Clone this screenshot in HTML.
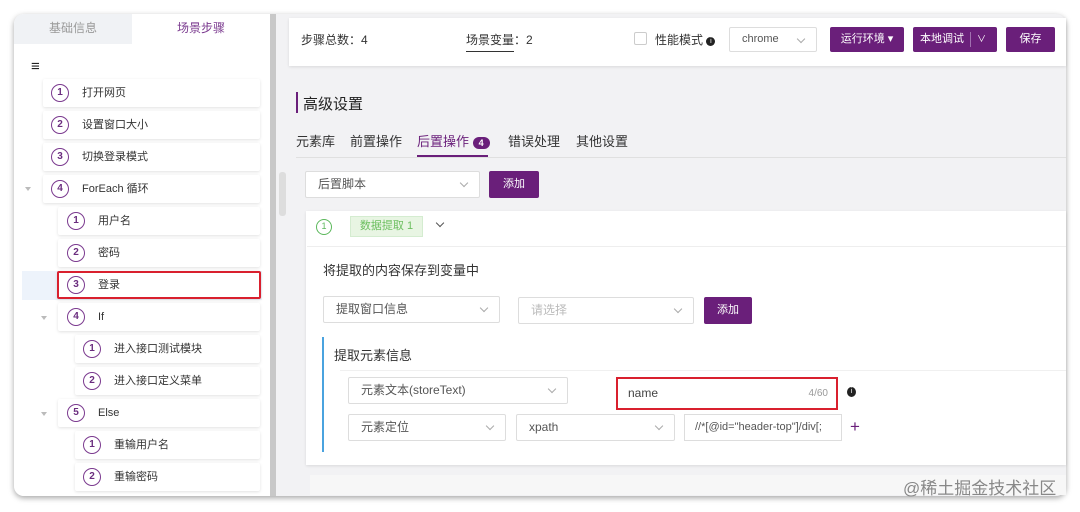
<!DOCTYPE html><html><head><meta charset="utf-8"><style>
*{box-sizing:border-box;margin:0;padding:0}
body{width:1080px;height:512px;background:#fff;font-family:"Liberation Sans","Noto Sans CJK SC",sans-serif;position:relative;overflow:hidden;color:#333}
.a{position:absolute}
.win{left:14px;top:14px;width:1052px;height:482px;border-radius:10px;overflow:hidden;background:#f2f2f4;box-shadow:0 2px 6px rgba(0,0,0,.35)}
.item{position:absolute;height:28px;background:#fff;box-shadow:0 1px 3px rgba(0,0,0,.12);border-radius:2px;font-size:11px;color:#333;line-height:28px}
.c{position:absolute;top:5px;width:18px;height:18px;border:1.5px solid #7b3a8f;border-radius:50%;font-size:10px;line-height:15px;text-align:center;color:#6a2c7e;font-weight:bold}
.arr{position:absolute;width:0;height:0;border-left:3px solid transparent;border-right:3px solid transparent;border-top:4px solid #bbb}
.sel{position:absolute;height:27px;background:#fff;border:1px solid #ddd;border-radius:2px;font-size:12px;line-height:25px;padding-left:12px;color:#555}
.sel:after{content:"";position:absolute;right:12px;top:8px;width:5px;height:5px;border-right:1px solid #aaa;border-bottom:1px solid #aaa;transform:rotate(45deg)}
.btn{position:absolute;background:#6a1f7a;color:#fff;font-size:11px;text-align:center;border-radius:2px}
</style></head><body>
<div class="a win">
<div class="a" style="left:0;top:0;width:256px;height:482px;background:#fff"></div>
<div class="a" style="left:0;top:0;width:118px;height:30px;background:#f0f2f5;color:#999;font-size:12px;text-align:center;line-height:28px">基础信息</div>
<div class="a" style="left:118px;top:0;width:138px;height:30px;color:#7b3a8f;font-size:12px;text-align:center;line-height:28px">场景步骤</div>
<div class="a" style="left:17px;top:44px;font-size:15px;font-weight:bold;color:#222">≡</div>
<div class="a" style="left:256px;top:0;width:6px;height:482px;background:#c8c8c8"></div>
<div class="a" style="left:265px;top:158px;width:7px;height:44px;background:#ddd;border-radius:3px"></div>
<div class="a" style="left:8px;top:257px;width:240px;height:29px;background:#edf3fb"></div>
</div>
<div class="item" style="left:43px;top:79px;width:217px"><span class="c" style="left:8px">1</span><span class="a" style="left:39px">打开网页</span></div>
<div class="item" style="left:43px;top:111px;width:217px"><span class="c" style="left:8px">2</span><span class="a" style="left:39px">设置窗口大小</span></div>
<div class="item" style="left:43px;top:143px;width:217px"><span class="c" style="left:8px">3</span><span class="a" style="left:39px">切换登录模式</span></div>
<div class="arr" style="left:25px;top:187px"></div>
<div class="item" style="left:43px;top:175px;width:217px"><span class="c" style="left:8px">4</span><span class="a" style="left:39px">ForEach 循环</span></div>
<div class="item" style="left:58px;top:207px;width:202px"><span class="c" style="left:9px">1</span><span class="a" style="left:40px">用户名</span></div>
<div class="item" style="left:58px;top:239px;width:202px"><span class="c" style="left:9px">2</span><span class="a" style="left:40px">密码</span></div>
<div class="item" style="left:57px;top:271px;width:204px;border:2px solid #d9202e;line-height:24px"><span class="c" style="left:8px;top:3px">3</span><span class="a" style="left:39px">登录</span></div>
<div class="arr" style="left:41px;top:316px"></div>
<div class="item" style="left:58px;top:303px;width:202px"><span class="c" style="left:9px">4</span><span class="a" style="left:40px">If</span></div>
<div class="item" style="left:75px;top:335px;width:185px"><span class="c" style="left:8px">1</span><span class="a" style="left:39px">进入接口测试模块</span></div>
<div class="item" style="left:75px;top:367px;width:185px"><span class="c" style="left:8px">2</span><span class="a" style="left:39px">进入接口定义菜单</span></div>
<div class="arr" style="left:41px;top:412px"></div>
<div class="item" style="left:58px;top:399px;width:202px"><span class="c" style="left:9px">5</span><span class="a" style="left:40px">Else</span></div>
<div class="item" style="left:75px;top:431px;width:185px"><span class="c" style="left:8px">1</span><span class="a" style="left:39px">重输用户名</span></div>
<div class="item" style="left:75px;top:463px;width:185px"><span class="c" style="left:8px">2</span><span class="a" style="left:39px">重输密码</span></div>

<div class="a" style="left:289px;top:18px;width:777px;height:48px;background:#fff;box-shadow:0 1px 3px rgba(0,0,0,.1)"></div>
<div class="a" style="left:301px;top:31px;font-size:12px">步骤总数：4</div>
<div class="a" style="left:466px;top:31px;font-size:12px">场景变量：2</div>
<div class="a" style="left:466px;top:51px;width:48px;height:1px;background:#333"></div>
<div class="a" style="left:634px;top:32px;width:13px;height:13px;border:1px solid #ccc;border-radius:2px"></div>
<div class="a" style="left:655px;top:31px;font-size:12px">性能模式 <span style="display:inline-block;width:9px;height:9px;border-radius:50%;background:#222;color:#fff;font-size:7px;line-height:9px;text-align:center;vertical-align:1px">i</span></div>
<div class="sel" style="left:729px;top:27px;width:88px;height:25px;font-size:11px;line-height:23px">chrome</div>
<div class="btn" style="left:830px;top:27px;width:74px;height:25px;line-height:25px">运行环境 ▾</div>
<div class="btn" style="left:913px;top:27px;width:84px;height:25px;line-height:25px;text-align:left;padding-left:7px">本地调试 <span style="position:absolute;left:57px;top:5px;width:1px;height:15px;background:#a070b0"></span><span style="position:absolute;left:64px;font-size:9px">∨</span></div>
<div class="btn" style="left:1006px;top:27px;width:49px;height:25px;line-height:25px">保存</div>

<div class="a" style="left:296px;top:92px;width:2px;height:21px;background:#6a1f7a"></div>
<div class="a" style="left:303px;top:93px;font-size:15px;color:#222">高级设置</div>
<div class="a" style="left:296px;top:131px;font-size:13px;color:#333">元素库</div>
<div class="a" style="left:350px;top:131px;font-size:13px">前置操作</div>
<div class="a" style="left:417px;top:131px;font-size:13px;color:#6a1f7a">后置操作 <span style="display:inline-block;width:17px;height:12px;border-radius:6px;background:#6a1f7a;color:#fff;font-size:9px;line-height:12px;text-align:center;font-weight:bold">4</span></div>
<div class="a" style="left:508px;top:131px;font-size:13px">错误处理</div>
<div class="a" style="left:576px;top:131px;font-size:13px">其他设置</div>
<div class="a" style="left:296px;top:157px;width:770px;height:1px;background:#e0e0e0"></div>
<div class="a" style="left:417px;top:155px;width:71px;height:2px;background:#6a1f7a"></div>
<div class="sel" style="left:305px;top:171px;width:175px">后置脚本</div>
<div class="btn" style="left:489px;top:171px;width:50px;height:27px;line-height:27px">添加</div>

<div class="a" style="left:306px;top:211px;width:760px;height:254px;background:#fff;box-shadow:0 1px 3px rgba(0,0,0,.1)"></div>
<div class="a" style="left:316px;top:219px;width:16px;height:16px;border:1.5px solid #5cb85c;border-radius:50%;color:#5cb85c;font-size:9px;text-align:center;line-height:13px">1</div>
<div class="a" style="left:350px;top:216px;width:73px;height:21px;background:#e8f5e3;border:1px solid #d4ecd0;color:#6cbf5f;font-size:11px;line-height:19px;text-align:center">数据提取 1</div>
<div class="a" style="left:437px;top:220px;width:6px;height:6px;border-right:1px solid #555;border-bottom:1px solid #555;transform:rotate(45deg)"></div>
<div class="a" style="left:307px;top:246px;width:759px;height:1px;background:#eee"></div>
<div class="a" style="left:323px;top:260px;font-size:13px;color:#333">将提取的内容保存到变量中</div>
<div class="sel" style="left:323px;top:296px;width:177px">提取窗口信息</div>
<div class="sel" style="left:518px;top:297px;width:176px;color:#bbb">请选择</div>
<div class="btn" style="left:704px;top:297px;width:48px;height:27px;line-height:27px">添加</div>
<div class="a" style="left:322px;top:337px;width:2px;height:115px;background:#4aa3df"></div>
<div class="a" style="left:334px;top:345px;font-size:13px">提取元素信息</div>
<div class="a" style="left:340px;top:370px;width:726px;height:1px;background:#f0f0f0"></div>
<div class="sel" style="left:348px;top:377px;width:220px">元素文本(storeText)</div>
<div class="a" style="left:616px;top:377px;width:222px;height:33px;border:2px solid #d9202e;font-size:12px;line-height:29px;padding-left:10px;color:#444">name<span style="position:absolute;right:8px;font-size:10px;color:#999">4/60</span></div>
<div class="a" style="left:847px;top:387px;width:9px;height:10px;border-radius:50%;background:#222;color:#fff;font-size:7px;text-align:center;line-height:10px">i</div>
<div class="sel" style="left:348px;top:414px;width:158px">元素定位</div>
<div class="sel" style="left:516px;top:414px;width:159px">xpath</div>
<div class="a" style="left:684px;top:414px;width:158px;height:27px;border:1px solid #ddd;font-size:11px;line-height:25px;padding-left:10px;color:#555;overflow:hidden;white-space:nowrap">//*[@id="header-top"]/div[;</div>
<div class="a" style="left:850px;top:417px;font-size:17px;color:#6a1f7a">+</div>
<div class="a" style="left:310px;top:475px;width:756px;height:20px;background:#f7f7f7"></div>
<div class="a" style="left:903px;top:474px;font-size:17px;color:#888">@稀土掘金技术社区</div>
</body></html>
